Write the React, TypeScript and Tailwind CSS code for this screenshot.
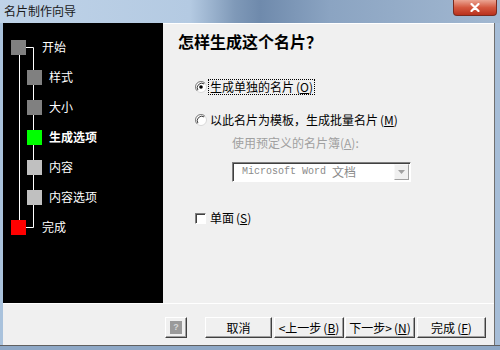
import React from "react";

function Radio({ checked }: { checked?: boolean }) {
  return (
    <svg width="12" height="12" viewBox="0 0 12 12" className="shrink-0">
      <circle cx="6" cy="6" r="5.5" fill="#ffffff" stroke="#d8d8d8" />
      <path d="M2.1 9.9 A5.5 5.5 0 0 1 9.9 2.1" stroke="#808080" fill="none" />
      <path d="M2.9 9.1 A4.5 4.5 0 0 1 9.1 2.9" stroke="#404040" fill="none" />
      {checked && <circle cx="6" cy="6" r="1.8" fill="#000000" />}
    </svg>
  );
}

function Btn({ className, children }: { className: string; children: React.ReactNode }) {
  return (
    <div
      className={
        "h-[21px] flex items-center justify-center bg-[#f0f0f0] border border-t-white border-l-white border-r-[#404040] border-b-[#404040] shadow-[inset_-1px_-1px_0_#a0a0a0] text-[12px] leading-[14px] text-black " +
        className
      }
    >
      {children}
    </div>
  );
}

function Key({ k }: { k: string }) {
  return (
    <span className="ml-[2px]">
      (<span className="underline">{k}</span>)
    </span>
  );
}

const steps: { label: string; color: string; mid: boolean; bold?: boolean }[] = [
  { label: "开始", color: "bg-[#808080]", mid: false },
  { label: "样式", color: "bg-[#808080]", mid: true },
  { label: "大小", color: "bg-[#808080]", mid: true },
  { label: "生成选项", color: "bg-[#00ff00]", mid: true, bold: true },
  { label: "内容", color: "bg-[#c0c0c0]", mid: true },
  { label: "内容选项", color: "bg-[#c0c0c0]", mid: true },
  { label: "完成", color: "bg-[#ff0000]", mid: false },
];

export default function App() {
  return (
    <div className="w-[500px] h-[350px] flex flex-col overflow-hidden bg-[#a9c0da] font-['Noto_Sans_CJK_SC','Noto_Sans',sans-serif] text-[12px] text-black">
      {/* Title bar */}
      <div className="h-[23px] flex items-start bg-[linear-gradient(to_right,#bfd3e8_0%,#b4cae2_38%,#7f99b8_47%,#6f8aac_52%,#8ba4c2_66%,#a2b8d1_100%)]">
        <span className="ml-[4px] mt-[3px] text-[12px] leading-[16px] text-[#1a1a1a]">名片制作向导</span>
        <div className="ml-auto mr-[3px] w-[44px] h-[16px] rounded-b-[4px] border border-t-0 border-[#7a2a1e] bg-[linear-gradient(#eba593,#d4583f_50%,#b9311d)] flex items-center justify-center">
          <svg width="10" height="9" viewBox="0 0 10 9">
            <path d="M1.5 1 L8.5 8 M8.5 1 L1.5 8" stroke="#ffffff" strokeWidth="2.2" strokeLinecap="round" />
          </svg>
        </div>
      </div>

      {/* Body */}
      <div className="flex-1 flex">
        <div className="w-[3px] bg-[#a9c2dc]" />
        <div className="flex-1 flex flex-col bg-[#f0f0f0]">
          <div className="h-[280px] flex">
            {/* Sidebar */}
            <div className="w-[160px] bg-black relative">
              <svg className="absolute inset-0" width="160" height="280">
                <path d="M16.5 31 V197" stroke="#ffffff" fill="none" />
                <path d="M23 24.5 H30.5 V204.5 H23" stroke="#ffffff" fill="none" />
              </svg>
              <div className="relative flex flex-col pt-[9px]">
                {steps.map((s) => (
                  <div key={s.label} className="h-[30px] flex items-center">
                    <div
                      className={
                        "w-[15px] h-[15px] shrink-0 " +
                        s.color +
                        (s.mid ? " ml-[24px] mr-[7px]" : " ml-[8px] mr-[16px]")
                      }
                    />
                    <span className={"text-white text-[12px] leading-[16px]" + (s.bold ? " font-bold" : "")}>
                      {s.label}
                    </span>
                  </div>
                ))}
              </div>
            </div>

            {/* Content */}
            <div className="flex-1 flex flex-col border-t border-white">
              <div className="ml-[15px] mt-[7px] h-[20px] flex items-center text-[16px] font-bold leading-[20px]">
                怎样生成这个名片？
              </div>

              <div className="ml-[32px] mt-[27px] h-[18px] flex items-center">
                <Radio checked />
                <span className="ml-[1px] border border-dotted border-black px-[1px] leading-[14px]">
                  生成单独的名片<Key k="O" />
                </span>
              </div>

              <div className="ml-[32px] mt-[15px] h-[18px] flex items-center">
                <Radio />
                <span className="ml-[3px] leading-[14px]">
                  以此名片为模板，生成批量名片<Key k="M" />
                </span>
              </div>

              <div className="ml-[69px] mt-[6px] h-[16px] flex items-center text-[#a0a0a0] leading-[14px]">
                使用预定义的名片簿(<span className="underline">A</span>):
              </div>

              <div className="ml-[69px] mt-[11px] w-[179px] h-[20px] flex items-center bg-white border border-t-[#808080] border-l-[#808080] border-r-white border-b-white shadow-[inset_1px_1px_0_#404040]">
                <span className="ml-[9px] text-[#8a8a8a] flex items-center">
                  <span className="font-['Liberation_Mono',monospace] text-[10px] leading-[14px]">Microsoft Word</span>
                  <span className="ml-[6px] text-[12px] leading-[14px]">文档</span>
                </span>
                <div className="ml-auto mr-[1px] w-[15px] h-[16px] flex items-center justify-center bg-[#f0f0f0] border border-t-[#f8f8f8] border-l-[#f8f8f8] border-r-[#a0a0a0] border-b-[#a0a0a0]">
                  <svg width="7" height="4" viewBox="0 0 7 4">
                    <path d="M0 0 H7 L3.5 4 Z" fill="#a0a0a0" />
                  </svg>
                </div>
              </div>

              <div className="ml-[32px] mt-[27px] h-[18px] flex items-center">
                <div className="w-[11px] h-[11px] bg-white border border-t-[#808080] border-l-[#808080] border-r-white border-b-white shadow-[inset_1px_1px_0_#404040]" />
                <span className="ml-[4px] leading-[14px]">
                  单面<Key k="S" />
                </span>
              </div>
            </div>
          </div>

          {/* Buttons */}
          <div className="flex-1 border-t border-white flex items-start pt-[13px]">
            <Btn className="ml-[162px] w-[22px]">
              <div className="w-[12px] h-[13px] bg-[#9a9a9a] flex items-center justify-center">
                <span className="text-[9px] leading-[9px] font-bold text-[#d8d8d8] font-['Liberation_Sans',sans-serif]">?</span>
              </div>
            </Btn>
            <Btn className="ml-[18px] w-[67px]">取消</Btn>
            <Btn className="ml-[2px] w-[70px]">
              &lt;上一步<Key k="B" />
            </Btn>
            <Btn className="ml-[1px] w-[70px]">
              下一步&gt;<Key k="N" />
            </Btn>
            <Btn className="ml-[2px] w-[69px]">
              完成<Key k="F" />
            </Btn>
          </div>
        </div>
        <div className="w-[6px] border-l border-[#707070] bg-[#a6bdd7]" />
      </div>
      <div className="h-[5px] border-t border-[#606060] bg-[#8ea8c6]" />
    </div>
  );
}
